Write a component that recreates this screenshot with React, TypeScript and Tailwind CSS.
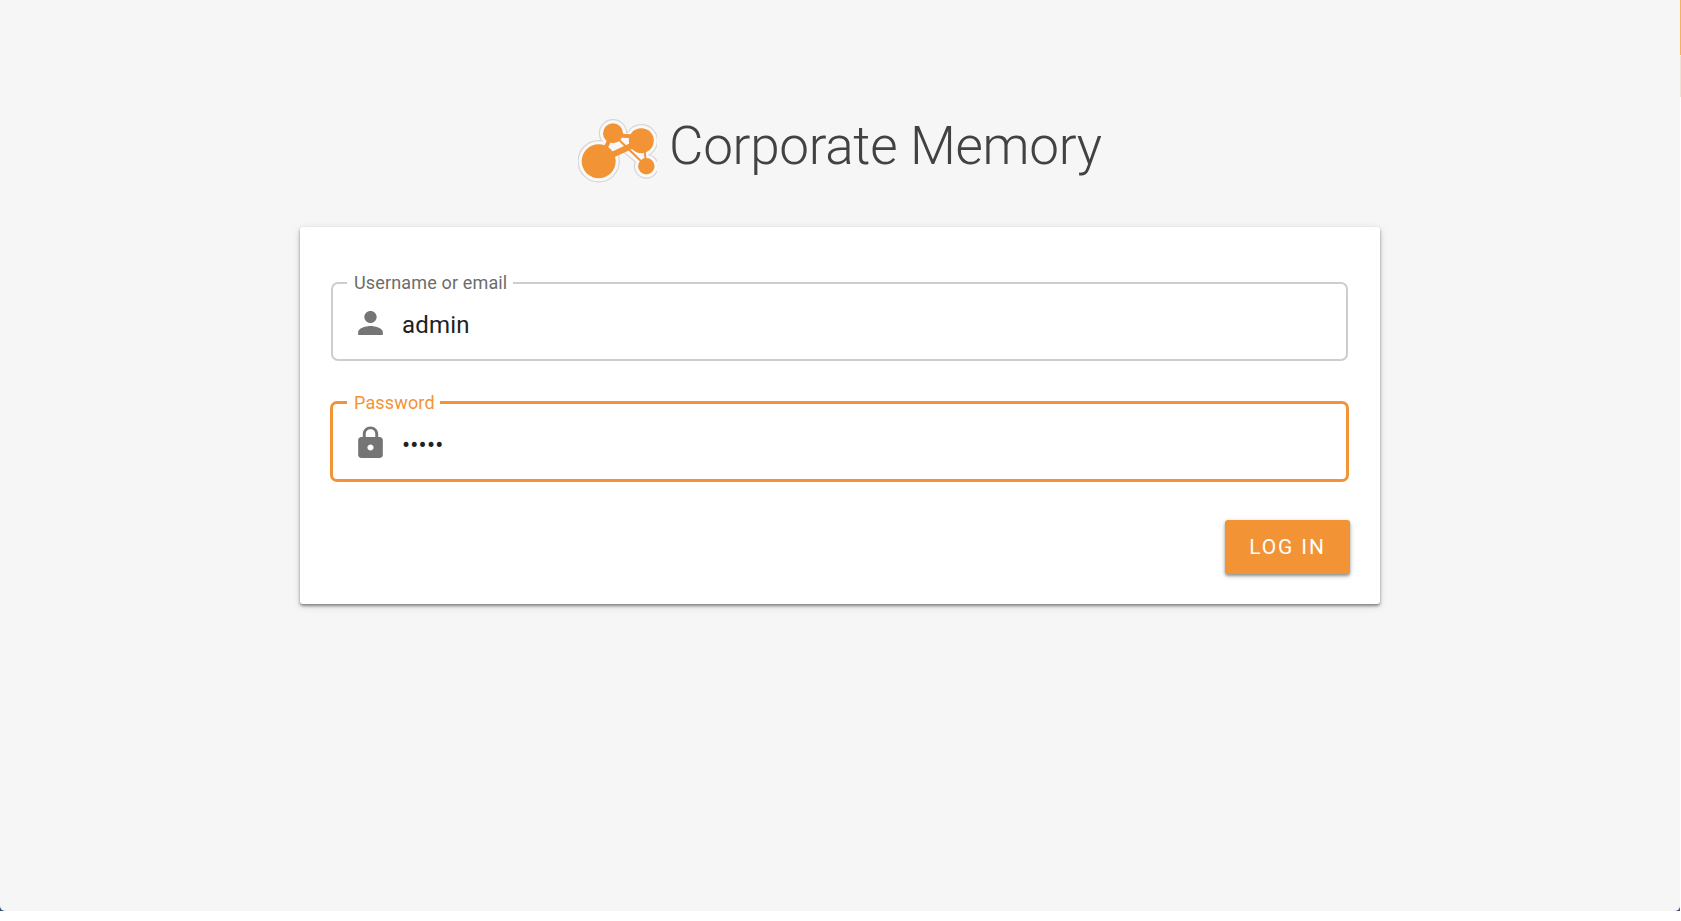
import type { ReactNode } from "react";

type FieldProps = {
  id: string;
  label: string;
  type: string;
  value: string;
  focused?: boolean;
  icon: ReactNode;
};

function Field({ id, label, type, value, focused, icon }: FieldProps) {
  return (
    <fieldset
      className={
        focused
          ? "-mx-px mt-[28px] h-[93px] w-[1019px] rounded-[7px] border-[3px] border-[#f29436] px-[14px]"
          : "h-[91px] w-[1017px] rounded-[7px] border-2 border-[#cdcdcd] px-[14px]"
      }
    >
      <legend
        className={
          focused
            ? "h-[27px] pr-[5px] pl-[7px] text-[18px] leading-[28px] tracking-[0.15px] text-[#f29436]"
            : "h-[26px] pr-[6px] pl-[7px] text-[18px] leading-[26px] tracking-[0.15px] text-[#6c6c6c]"
        }
      >
        {label}
      </legend>
      <label htmlFor={id} className="mt-[10px] flex h-[34px] items-center gap-[13px] pl-[5px]">
        {icon}
        <input
          id={id}
          type={type}
          defaultValue={value}
          className="mt-[4px] w-[900px] bg-transparent text-[24px] leading-[34px] tracking-[0.2px] text-[#212121] outline-none"
        />
      </label>
    </fieldset>
  );
}

function Logo() {
  const shapes = (
    <>
      <circle cx="20.700" cy="44.300" r="17" />
      <circle cx="35" cy="16.300" r="10" />
      <circle cx="63.300" cy="23.700" r="12.500" />
      <circle cx="68.300" cy="49.300" r="8.200" />
    </>
  );
  return (
    <svg className="mt-[5px] h-[76px] w-[79px] shrink-0" viewBox="0 0 79 76">
      <g fill="#d6d6d6" stroke="#d6d6d6" strokeWidth="8.400">
        {shapes}
        <path d="M21 44 35 16 63 23 68 49 44 29Z" />
      </g>
      <g fill="#f9f9f9" stroke="#f9f9f9" strokeWidth="6">
        {shapes}
        <path d="M21 44 35 16 63 23 68 49 44 29Z" />
      </g>
      <g stroke="#f29436" fill="none">
        <path d="M21 44 35 16" strokeWidth="4" />
        <path d="M35 18 63 20" strokeWidth="4" />
        <path d="M21 44 64 24" strokeWidth="6" />
        <path d="M36 18 68 49" strokeWidth="2" />
        <path d="M66 26 68 48" strokeWidth="2" />
      </g>
      <g fill="#f29436">{shapes}</g>
    </svg>
  );
}

export default function App() {
  return (
    <div className="flex h-[921px] w-[1681px] flex-col overflow-hidden bg-white font-[Roboto,sans-serif]">
      <div className="flex h-[911px] bg-[#3b5075]">
        <main className="flex h-[911px] w-[1680px] flex-col items-center rounded-b-[5px] bg-[#f6f6f6] pt-[112px]">
          <header className="flex h-[115px] w-[1080px] items-start pl-[278px]">
            <Logo />
            <h1 className="ml-[12px] text-[53px] leading-[68px] font-light tracking-[-0.28px] whitespace-nowrap text-[#424242]">
              Corporate Memory
            </h1>
          </header>
          <form className="h-[377px] w-[1080px] rounded-[3px] bg-white pt-[43px] pl-[31px] shadow-[0_2px_3px_rgba(0,0,0,0.4),0_2px_8px_rgba(0,0,0,0.14)]">
            <Field
              id="username"
              label="Username or email"
              type="text"
              value="admin"
              icon={
                <svg className="h-[36px] w-[37px] shrink-0" viewBox="0 0 24 24" preserveAspectRatio="none" fill="#757575">
                  <path d="M12 12c2.210 0 4-1.790 4-4s-1.790-4-4-4-4 1.790-4 4 1.790 4 4 4zm0 2c-2.670 0-8 1.340-8 4v2h16v-2c0-2.660-5.330-4-8-4z" />
                </svg>
              }
            />
            <Field
              id="password"
              label="Password"
              type="password"
              value="admin"
              focused
              icon={
                <svg className="h-[36px] w-[37px] shrink-0" viewBox="0 0 24 24" preserveAspectRatio="none" fill="#757575">
                  <path d="M18 8h-1V6c0-2.760-2.240-5-5-5S7 3.240 7 6v2H6c-1.100 0-2 .9-2 2v10c0 1.100.9 2 2 2h12c1.100 0 2-.9 2-2V10c0-1.100-.9-2-2-2zm-6 9c-1.100 0-2-.9-2-2s.9-2 2-2 2 .9 2 2-.9 2-2 2zm3.100-9H8.900V6c0-1.710 1.390-3.100 3.100-3.100 1.710 0 3.100 1.390 3.100 3.100v2z" />
                </svg>
              }
            />
            <div className="flex justify-end pt-[38px] pr-[30px]">
              <button
                type="button"
                className="h-[54px] w-[125px] rounded-[3px] bg-[#f29436] pt-[2px] text-[21px] tracking-[1.9px] text-white shadow-[0_2px_3px_rgba(0,0,0,0.35),0_2px_6px_rgba(0,0,0,0.14)]"
              >
                LOG IN
              </button>
            </div>
          </form>
        </main>
        <div className="flex w-px flex-col bg-white">
          <div className="h-[55px] bg-[#fbb255]" />
          <div className="mt-px h-[41px] bg-[#ebe3d3]" />
        </div>
      </div>
    </div>
  );
}
